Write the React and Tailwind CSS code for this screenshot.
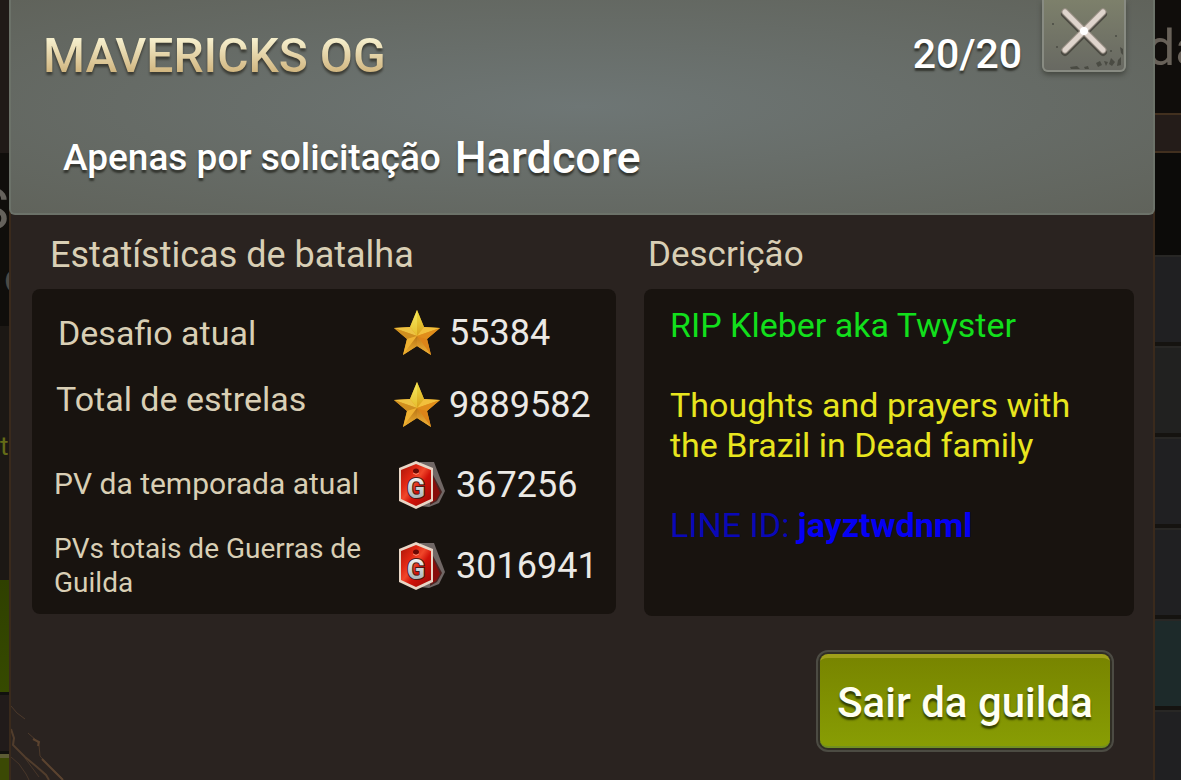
import React from 'react';

const stats = [
    { label: 'Desafio atual', value: '55384', icon: 'star', row: 'h-[72px] pl-[26px]', text: 'text-[34px]' },
    { label: 'Total de estrelas', value: '9889582', icon: 'star', row: 'h-[72px] pl-6', text: 'pb-3 text-[34px]' },
    { label: 'PV da temporada atual', value: '367256', icon: 'tag', row: 'h-[88px] pl-[22px]', text: 'pb-1 text-[30px]' },
    { label: 'PVs totais de Guerras de Guilda', value: '3016941', icon: 'tag', row: 'h-[74px] pl-[22px]', text: 'text-[28px] leading-[34px]' },
];

const memberRows = ['bg-[#202022]', 'bg-[#212120]', 'bg-[#202022]', 'bg-[#202022]', 'bg-[#1d2a2a]', 'bg-[#202022]'];

function StarIcon() {
    return (
        <svg width="48" height="48" viewBox="0 0 48 48" className="shrink-0" aria-hidden="true">
            <defs>
                <linearGradient id="starTop" x1="0" y1="0" x2="0" y2="1">
                    <stop offset="0" stopColor="#efe243" />
                    <stop offset="1" stopColor="#d8a01c" />
                </linearGradient>
                <linearGradient id="starTopLeft" x1="0" y1="0" x2="0" y2="1">
                    <stop offset="0" stopColor="#f5ec62" />
                    <stop offset="1" stopColor="#e5bc2b" />
                </linearGradient>
                <linearGradient id="starLow" x1="0" y1="0" x2="0" y2="1">
                    <stop offset="0" stopColor="#c67a17" />
                    <stop offset="1" stopColor="#eeb43a" />
                </linearGradient>
                <linearGradient id="starLeft" x1="0" y1="0" x2="0" y2="1">
                    <stop offset="0" stopColor="#b87416" />
                    <stop offset="1" stopColor="#f0b232" />
                </linearGradient>
            </defs>
            <path d="M24 1 31 18 47 19 34 30 38 46 24 37 10 46 14 30 1 19 17 18Z" fill="#df9a1d" />
            <path d="M24 1V27L17 18Z" fill="url(#starTopLeft)" />
            <path d="M24 1V27L31 18Z" fill="url(#starTop)" />
            <path d="M1 19 17 18 24 27Z" fill="#edc343" />
            <path d="M1 19 24 27 14 30Z" fill="#cf8f20" />
            <path d="M47 19 31 18 24 27Z" fill="#f2c03c" />
            <path d="M47 19 24 27 34 30Z" fill="#e08d1b" />
            <path d="M10 46 14 30 24 27Z" fill="#efb232" />
            <path d="M10 46 24 27V37Z" fill="url(#starLeft)" />
            <path d="M38 46 34 30 24 27Z" fill="#dd8419" />
            <path d="M38 46 24 27V37Z" fill="url(#starLow)" />
        </svg>
    );
}

function TagIcon() {
    return (
        <svg width="48" height="50" viewBox="0 0 48 50" className="shrink-0" aria-hidden="true">
            <defs>
                <linearGradient id="tagRed" x1="0" y1="0" x2="1" y2="1">
                    <stop offset="0" stopColor="#a81508" />
                    <stop offset="0.3" stopColor="#e02713" />
                    <stop offset="0.45" stopColor="#f0472a" />
                    <stop offset="0.6" stopColor="#d01209" />
                    <stop offset="1" stopColor="#9d0906" />
                </linearGradient>
                <linearGradient id="tagLetter" x1="0" y1="0" x2="0" y2="1">
                    <stop offset="0" stopColor="#ffffff" />
                    <stop offset="1" stopColor="#93a1a6" />
                </linearGradient>
            </defs>
            <path d="M22 2H36L47 31 41 43 31 47 22 46Z" fill="#706765" />
            <path d="M33 11 44 32 39 41 32 45Z" fill="#4b2422" />
            <path d="M34 15 42 33 38 40 33 43Z" fill="#870d0a" />
            <path d="M18 1 35 8V41L18 49 1 41V8Z" fill="#e8d6c6" />
            <path d="M18 4 33 10V39L18 46 3 39V10Z" fill="url(#tagRed)" />
            <ellipse cx="18" cy="11" rx="3" ry="2.500" fill="#6a0a05" />
            <path d="M15 13Q18 16 21 13" stroke="#ff8a6c" fill="none" />
            <text x="18" y="38" textAnchor="middle" fontSize="27" fontWeight="bold" fill="url(#tagLetter)" stroke="#4a1a16" strokeWidth="2" paintOrder="stroke">G</text>
        </svg>
    );
}

function CloseIcon() {
    return (
        <svg width="80" height="70" viewBox="0 0 80 70" aria-hidden="true">
            <g fill="#4a4b43">
                <path d="M52 63 56 61 58 65 54 67ZM60 61 64 62 62 66ZM67 58 71 62 68 66 65 64ZM74 60 77 57V65L73 66Z" />
                <path d="M26 67 33 66 36 69H27ZM40 67 44 66 45 69H41Z" />
                <circle cx="9" cy="24" r="1" />
                <circle cx="13" cy="47" r="1" />
                <circle cx="72" cy="36" r="1" />
                <circle cx="67" cy="51" r="1" />
                <path d="M76 47 79 49V55L77 53Z" />
            </g>
            <path d="M21 14 59 52M59 14 21 52" stroke="#4b4a42" strokeWidth="8" strokeLinecap="round" />
            <path d="M21 12 59 50M59 12 21 50" stroke="#9f958b" strokeWidth="7" strokeLinecap="round" />
            <path d="M21 12 59 50M59 12 21 50" stroke="#dfd5cd" strokeWidth="5" strokeLinecap="round" />
            <circle cx="40" cy="31" r="4" fill="#ffffff" />
        </svg>
    );
}

function Cracks() {
    return (
        <svg className="absolute bottom-0 left-0" width="64" height="76" viewBox="0 0 64 76" fill="none" stroke="#5b432f" aria-hidden="true">
            <path d="M0 2 6 9 14 15M17 29 26 37 28 41 29 52 38 62 50 73 52 76" opacity="0.7" />
            <path d="M22 35 28 38 27 42M31 55 42 66 52 76" strokeWidth="2" />
            <path d="M0 25 3 34 2 41 14 53 26 63 35 71 38 76" strokeWidth="2" opacity="0.8" />
            <path d="M0 53 8 60 15 70 18 76M14 54 28 73" opacity="0.6" />
        </svg>
    );
}

function LeftEdge() {
    return (
        <div className="flex w-[9px] shrink-0 flex-col overflow-hidden bg-[#1c1814]" aria-hidden="true">
            <div className="h-[153px] bg-[#201a17]" />
            <div className="flex h-[173px] flex-col items-end bg-[#100e0b] pt-6">
                <span className="text-[58px] leading-[64px] text-[#65625c]">S</span>
                <span className="mt-2 self-start pl-1 text-[40px] leading-[60px] text-[#4c4a45]">d</span>
            </div>
            <div className="h-[254px] pt-[104px]">
                <span className="text-[26px] leading-8 text-[#646b17]">t</span>
            </div>
            <div className="h-[112px] bg-linear-to-b from-[#2f4000] to-[#364a00]" />
            <div className="h-[62px] border-y-[3px] border-[#11110e] bg-[#211b1a]" />
            <div className="flex-1 border-t-4 border-[#5c5c35] bg-[#3b4904]" />
        </div>
    );
}

function RightEdge() {
    return (
        <div className="flex h-screen w-[26px] shrink-0 flex-col overflow-hidden bg-[#151310]" aria-hidden="true">
            <div className="h-[113px] shrink-0 bg-[#100d0b] pt-5">
                <span className="-ml-2 text-[50px] leading-[56px] text-[#686159]">da</span>
            </div>
            <div className="h-10 shrink-0 border-y-2 border-[#42301f] bg-[#241c19]" />
            <div className="h-[102px] shrink-0 bg-[#0c0b09]" />
            {memberRows.map((color, i) => (
                <div key={i} className={`mb-1 h-[87px] shrink-0 border-t-2 border-[#282725] ${color}`} />
            ))}
        </div>
    );
}

export default function App() {
    return (
        <div className="flex min-h-screen bg-[#151310] font-['Roboto','Liberation_Sans',sans-serif]">
            <LeftEdge />
            <main className="relative flex min-w-0 flex-1 flex-col border-x-2 border-[#3a2a1c] bg-[#2a2320]">
                <Cracks />
                <header className="-mx-0.5 h-[215px] rounded-b-md border-x-2 border-b-2 border-[#6c7269] bg-radial from-[#6e7675] to-[#60635b] text-white text-shadow-[0_3px_2px_#33352f]">
                    <div className="flex items-start pr-[27px] pl-8">
                        <h1 className="mt-6 flex-1 bg-linear-to-b from-[#f5eecb] from-25% to-[#cdb078] to-80% bg-clip-text text-[48px] leading-[64px] font-medium text-transparent text-shadow-none drop-shadow-[0_3px_1px_#3b3c35]">
                            MAVERICKS OG
                        </h1>
                        <span className="mt-7 mr-5 text-[41px] leading-[52px] font-medium">20/20</span>
                        <button
                            type="button"
                            aria-label="Fechar"
                            className="h-[72px] w-[84px] overflow-hidden rounded-b-md border-x-2 border-b-2 border-[#888b82] bg-linear-to-b from-[#7d806b] to-[#686962] shadow-[0_3px_5px_#464942]"
                        >
                            <CloseIcon />
                        </button>
                    </div>
                    <div className="mt-11 flex items-center gap-3.5 pl-[52px] leading-[52px] font-medium">
                        <span className="text-[37px]">Apenas por solicitação</span>
                        <span className="text-[45px]">Hardcore</span>
                    </div>
                </header>

                <div className="grid grid-cols-[584fr_490fr] gap-x-7 pt-4 pr-[19px] pl-[21px] text-[#d9cfb5]">
                    <section>
                        <h2 className="pl-[18px] text-[36px] leading-[48px]">Estatísticas de batalha</h2>
                        <dl className="mt-[10px] h-[325px] rounded-lg bg-[#18130f] pt-2">
                            {stats.map((s) => (
                                <div key={s.label} className={`flex items-center ${s.row}`}>
                                    <dt className={`flex-1 ${s.text}`}>{s.label}</dt>
                                    <dd className={`flex shrink-0 items-center text-[36px] text-[#ebe9e5] ${s.icon === 'star' ? 'w-[223px] gap-2' : 'w-[218px] gap-2.5'}`}>
                                        {s.icon === 'star' ? <StarIcon /> : <TagIcon />}
                                        {s.value}
                                    </dd>
                                </div>
                            ))}
                        </dl>
                    </section>
                    <section>
                        <h2 className="pl-1 text-[35px] leading-[48px]">Descrição</h2>
                        <div className="mt-[10px] h-[327px] rounded-lg bg-[#18130f] pt-4 pl-[26px] text-[34px] leading-10">
                            <p className="text-[#12df1c]">RIP Kleber aka Twyster</p>
                            <p className="mt-10 text-[#e8e51e]">
                                Thoughts and prayers with
                                <br />
                                the Brazil in Dead family
                            </p>
                            <p className="mt-10 text-[#0a08b8]">
                                LINE ID: <b className="text-[#0500f5]">jayztwdnml</b>
                            </p>
                        </div>
                    </section>
                </div>

                <div className="mt-[34px] flex justify-end pr-[39px]">
                    <button
                        type="button"
                        className="h-[102px] w-[298px] rounded-xl border-2 border-[#4c4b43] bg-[#302e25] p-0.5 text-[42px] font-medium text-[#fffff2] text-shadow-[0_3px_2px_#354000]"
                    >
                        <span className="flex h-full items-center justify-center rounded-lg border-t-4 border-b-2 border-t-[#9fa01a] border-b-[#719020] bg-linear-to-b from-[#788500] to-[#889d04]">
                            Sair da guilda
                        </span>
                    </button>
                </div>
            </main>
            <RightEdge />
        </div>
    );
}
